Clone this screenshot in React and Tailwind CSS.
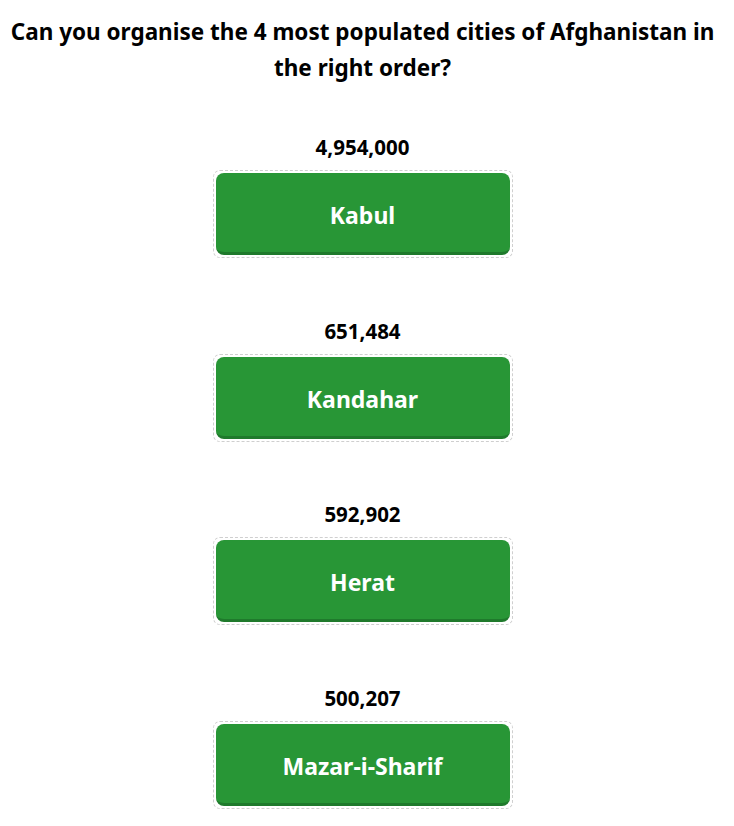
export default function App() {
  const items = [
    { n: "4,954,000", c: "Kabul" },
    { n: "651,484", c: "Kandahar" },
    { n: "592,902", c: "Herat" },
    { n: "500,207", c: "Mazar-i-Sharif" },
  ];
  return (
    <div className="min-h-[826px] bg-white text-black pr-[9px]" style={{ fontFamily: '"Noto Sans", "Open Sans", sans-serif' }}>
      <h1 className="pt-[14px] px-1 text-center text-[22.5px] leading-[36px] font-bold">
        Can you organise the 4 most populated cities of Afghanistan in the right order?
      </h1>
      <div className="flex flex-col items-center mt-[47px] gap-[58.5px]">
        {items.map((it) => (
          <div key={it.c} className="flex flex-col items-center">
            <div className="text-[20.5px] leading-[28px] font-bold">{it.n}</div>
            <div className="mt-[9px] w-[300px] rounded-[7px] border border-dashed border-[#cfcfcf] p-[2px]">
              <div className="h-[82px] pt-[6px] rounded-[8px] bg-[#289636] border-b-[3px] border-[#1f7a2c] flex items-center justify-center text-white text-[23px] font-bold">
                {it.c}
              </div>
            </div>
          </div>
        ))}
      </div>
    </div>
  );
}
